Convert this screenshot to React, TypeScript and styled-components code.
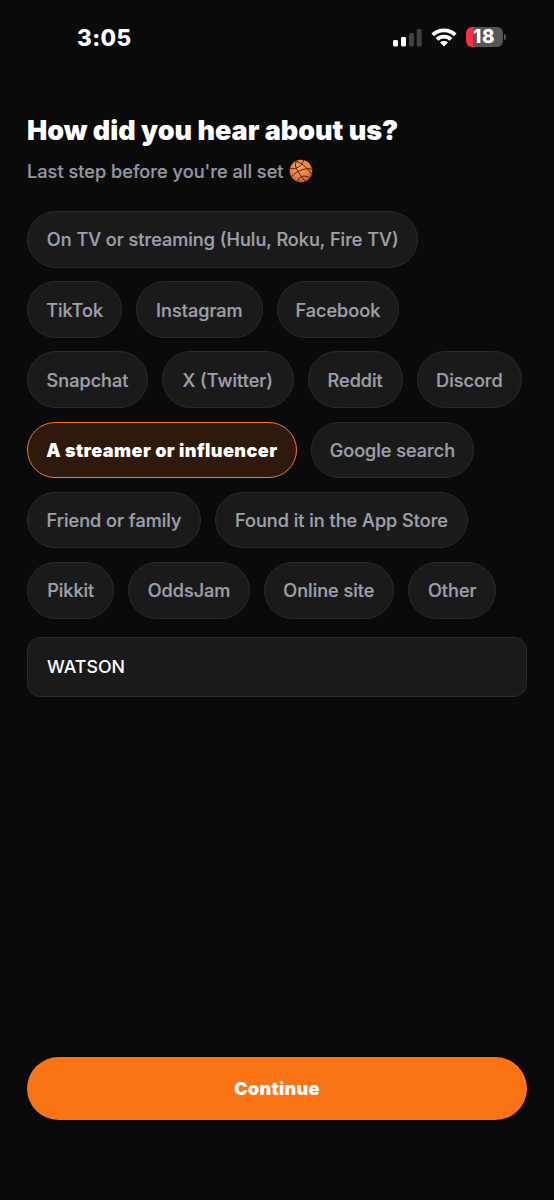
import React, { useState } from "react";
import styled, { createGlobalStyle } from "styled-components";

const GlobalStyle = createGlobalStyle`
  *, *::before, *::after { box-sizing: border-box; }
  body { margin: 0; background: #0a0a0a; }
  button, input { font: inherit; color: inherit; margin: 0; }
`;

const Screen = styled.main`
  display: flex;
  flex-direction: column;
  width: 100%;
  height: 1200px;
  padding: 0 27px 80px;
  background: #0a0a0a;
  color: #fff;
  font-family: Inter, "Liberation Sans", sans-serif;
  -webkit-font-smoothing: antialiased;
`;

const StatusBar = styled.header`
  display: flex;
  align-items: center;
  justify-content: space-between;
  height: 74px;
  padding: 0 21.5px 0 50px;
`;

const Clock = styled.time`
  font-size: 22.5px;
  font-weight: 800;
  line-height: 28px;
  letter-spacing: 0.4px;
  padding-top: 2px;
`;

const Indicators = styled.div`
  display: flex;
  align-items: center;
  svg { display: block; }
`;

const WifiSlot = styled.div`
  margin: 0 9px 0 9px;
`;

const Battery = styled.div`
  display: flex;
  align-items: center;
  gap: 1px;
`;

const BatteryBody = styled.div`
  display: flex;
  align-items: center;
  justify-content: center;
  width: 37px;
  height: 20px;
  border-radius: 6px;
  background: linear-gradient(90deg, #ff3040 0 7px, #57575a 7px);
  font-size: 18.8px;
  font-weight: 800;
  line-height: 20px;
  letter-spacing: 0.5px;
`;

const BatteryCap = styled.div`
  width: 2px;
  height: 6px;
  border-radius: 0 2px 2px 0;
  background: #57575a;
`;

const Title = styled.h1`
  margin: 40px 0 0;
  font-size: 27px;
  font-weight: 900;
  line-height: 34px;
  letter-spacing: -0.02px;
  white-space: nowrap;
`;

const Subtitle = styled.p`
  display: flex;
  align-items: center;
  gap: 5px;
  margin: 11px 0 0;
  height: 24px;
  font-size: 18.2px;
  font-weight: 500;
  color: #9496a1;
  white-space: nowrap;
  -webkit-text-stroke: 0.2px currentColor;
`;

const Options = styled.div`
  display: flex;
  flex-wrap: wrap;
  gap: 13.6px 14px;
  margin-top: 28px;
`;

const Chip = styled.button<{ $width: number; $active: boolean }>`
  display: flex;
  align-items: center;
  justify-content: center;
  flex: 0 0 ${(p) => p.$width}px;
  height: 56.6px;
  padding: 0.4px 0 0;
  border: ${(p) => (p.$active ? "1.4px solid #f07c2a" : "1px solid #2a2a2b")};
  border-radius: 29px;
  background: ${(p) => (p.$active ? "#2e190c" : "#1a1a1a")};
  color: ${(p) => (p.$active ? "#fff" : "#9da0ab")};
  font-size: 18.1px;
  font-weight: ${(p) => (p.$active ? 900 : 500)};
  line-height: 24px;
  letter-spacing: ${(p) => (p.$active ? "0.4px" : "0")};
  -webkit-text-stroke: ${(p) => (p.$active ? "0" : "0.2px currentColor")};
  white-space: nowrap;
`;

const NameField = styled.input`
  width: 100%;
  height: 60px;
  margin-top: 18px;
  padding: 0 19px;
  border: 1px solid #2a2a2b;
  border-radius: 13px;
  outline: none;
  background: #1a1a1a;
  color: #fff;
  font-size: 17.8px;
  font-weight: 500;
`;

const ContinueButton = styled.button`
  height: 63px;
  margin-top: auto;
  padding: 0 0 1px;
  border: 0;
  border-radius: 32px;
  background: #fa7416;
  color: #fff;
  font-size: 18px;
  font-weight: 900;
  letter-spacing: 0.3px;
`;

const options = [
  { label: "On TV or streaming (Hulu, Roku, Fire TV)", width: 391.4 },
  { label: "TikTok", width: 95.2 },
  { label: "Instagram", width: 126.4 },
  { label: "Facebook", width: 122.6 },
  { label: "Snapchat", width: 121 },
  { label: "X (Twitter)", width: 131.6 },
  { label: "Reddit", width: 95.2 },
  { label: "Discord", width: 105.2 },
  { label: "A streamer or influencer", width: 269.6 },
  { label: "Google search", width: 163.6 },
  { label: "Friend or family", width: 174 },
  { label: "Found it in the App Store", width: 253 },
  { label: "Pikkit", width: 87.4 },
  { label: "OddsJam", width: 121.3 },
  { label: "Online site", width: 130.4 },
  { label: "Other", width: 88.4 },
];

const SignalIcon = () => (
  <svg width="29" height="19" viewBox="0 0 29 19">
    <rect x="0" y="12" width="5" height="6.5" rx="1.4" fill="#fff" />
    <rect x="8" y="9" width="5" height="9.5" rx="1.4" fill="#fff" />
    <rect x="16" y="5" width="5" height="13.5" rx="1.4" fill="#404041" />
    <rect x="23.7" y="1" width="5" height="17.5" rx="1.4" fill="#404041" />
  </svg>
);

const WifiIcon = () => (
  <svg width="26" height="19" viewBox="0 0 26 19" fill="none" stroke="#fff" strokeWidth="3.8">
    <path d="M1.8 6.8C8 .8 18 .8 24.2 6.8" />
    <path d="M6 11.3c4-3.7 10-3.7 14 0" />
    <path d="M13 18.6l-4-4.1c2.3-1.9 5.7-1.9 8 0z" fill="#fff" stroke="none" />
  </svg>
);

const Basketball = () => (
  <svg width="24" height="24" viewBox="0 0 24 24">
    <defs>
      <radialGradient id="ball" cx="45%" cy="35%" r="65%">
        <stop offset="0" stopColor="#f9a45c" />
        <stop offset="0.65" stopColor="#ea7f42" />
        <stop offset="1" stopColor="#c4592a" />
      </radialGradient>
    </defs>
    <circle cx="12" cy="12" r="11.3" fill="url(#ball)" />
    <g fill="none" stroke="#4a2016" strokeWidth="1">
      <path d="M8.5 1.4C5.6 3.5 6 7.5 8.4 11.5C11 16 14.2 19.5 16 22.3" />
      <path d="M6.2 2.4C11 2.8 17.8 8 22.6 15" />
      <path d="M1 9.6C7.2 10.6 13 7.4 14.6 1.1" />
      <path d="M2.6 17.6C6.6 12.8 14.2 8.6 22.9 10" />
      <path d="M8.8 22.6C9.2 18.5 13.5 15 20.6 18.6" />
    </g>
  </svg>
);

export default function App() {
  const [selected, setSelected] = useState("A streamer or influencer");
  const [name, setName] = useState("WATSON");

  return (
    <>
      <GlobalStyle />
      <Screen>
        <StatusBar>
          <Clock>3:05</Clock>
          <Indicators>
            <SignalIcon />
            <WifiSlot>
              <WifiIcon />
            </WifiSlot>
            <Battery>
              <BatteryBody>18</BatteryBody>
              <BatteryCap />
            </Battery>
          </Indicators>
        </StatusBar>
        <Title>How did you hear about us?</Title>
        <Subtitle>
          Last step before you're all set <Basketball />
        </Subtitle>
        <Options>
          {options.map(({ label, width }) => (
            <Chip
              key={label}
              type="button"
              $width={width}
              $active={label === selected}
              onClick={() => setSelected(label)}
            >
              {label}
            </Chip>
          ))}
        </Options>
        <NameField value={name} onChange={(e) => setName(e.target.value)} />
        <ContinueButton type="button">Continue</ContinueButton>
      </Screen>
    </>
  );
}
